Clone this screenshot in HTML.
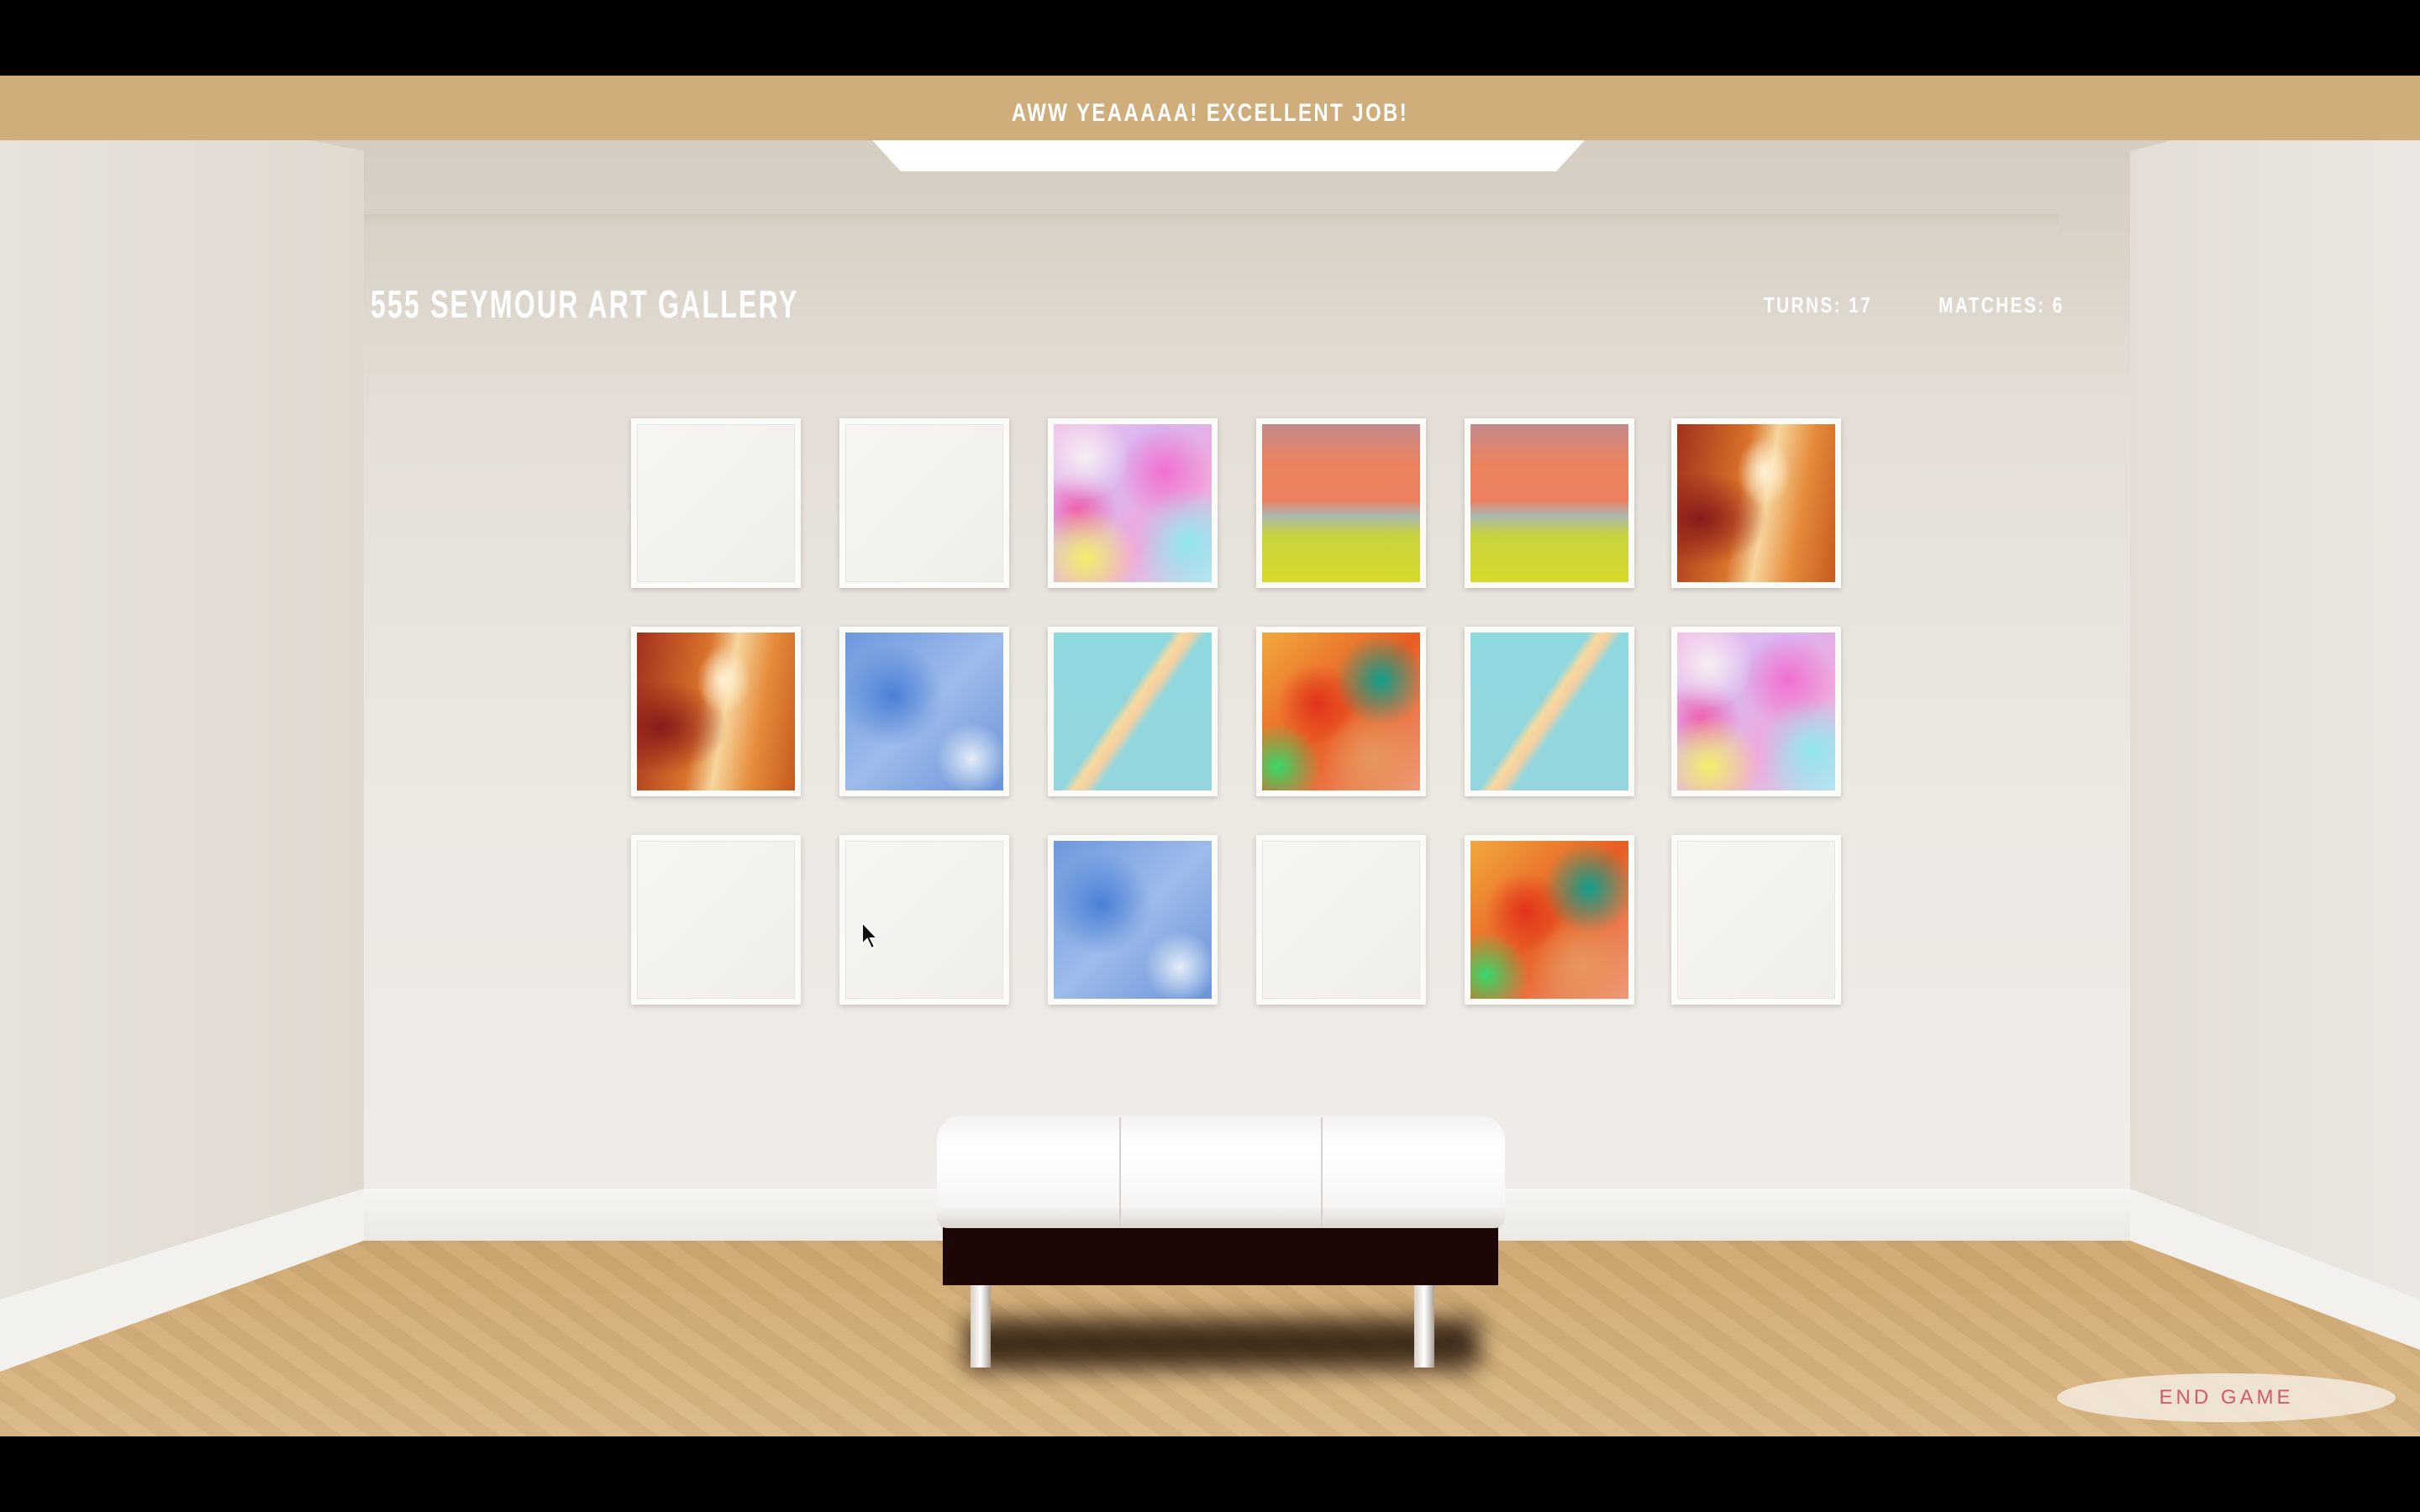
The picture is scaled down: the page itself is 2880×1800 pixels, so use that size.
<!DOCTYPE html>
<html><head><meta charset="utf-8"><style>
*{margin:0;padding:0;box-sizing:border-box}
body{width:2880px;height:1800px;overflow:hidden;background:#000;font-family:"Liberation Sans",sans-serif;position:relative}
.abs{position:absolute}
#room{left:0;top:90px;width:2880px;height:1620px;overflow:hidden;
background:linear-gradient(180deg,#d3c9bd 0px,#d9d1c6 180px,#e4ded6 400px,#ebe7e1 800px,#efece8 1300px,#f0eeeb 1400px)}
.txt{color:#fff;letter-spacing:3px;transform-origin:left center}
.card{position:absolute;width:202px;height:202px;background:#fbfbf8;box-shadow:0 2px 6px rgba(0,0,0,.18);padding:7px}
.card div{width:100%;height:100%}
.A div{background:linear-gradient(135deg,#f7f6f2,#efeee9);border:1px solid #e6e4de}
.B div{background:radial-gradient(circle at 20% 20%,#f6eef2 0,transparent 25%),radial-gradient(circle at 85% 75%,#8fe8ee 0,transparent 30%),radial-gradient(circle at 20% 85%,#f1ee6a 0,transparent 28%),radial-gradient(circle at 70% 30%,#f06fd0 0,transparent 30%),radial-gradient(circle at 15% 55%,#ef5fae 0,transparent 25%),linear-gradient(135deg,#f4c0e8,#d8b6f0,#f0a8dc,#b9e8f0)}
.C div{background:linear-gradient(180deg,#c48a8e 0%,#e9825c 25%,#ee8060 48%,#a9b8b0 58%,#c8d23e 70%,#d6da2c 100%)}
.D div{background:radial-gradient(ellipse at 55% 30%,#fff2d6 0,transparent 22%),radial-gradient(ellipse at 15% 60%,#8a1a1a 0,transparent 35%),linear-gradient(100deg,#a2311e,#d9722a 40%,#f6d59c 55%,#e58a3a 75%,#c65a1e)}
.E div{background:radial-gradient(circle at 80% 80%,#e4ecf7 0,transparent 20%),radial-gradient(circle at 30% 40%,#4b7fd6 0,transparent 35%),linear-gradient(135deg,#6b98dd,#9dbbea 50%,#6a93d8)}
.F div{background:linear-gradient(125deg,transparent 44%,#f3d9a0 48%,#f6cfa0 52%,transparent 57%),linear-gradient(180deg,#8ed8df,#95d6de)}
.G div{background:radial-gradient(circle at 75% 30%,#10a08c 0,transparent 28%),radial-gradient(circle at 35% 45%,#e2321c 0,transparent 30%),radial-gradient(circle at 10% 85%,#38d86a 0,transparent 22%),radial-gradient(circle at 70% 80%,#e6985c 0,transparent 30%),linear-gradient(135deg,#f1a83e,#e85d22 50%,#ee9a7a)}
</style></head><body>
<div id="room" class="abs">
 <!-- ceiling moulding -->
 <div class="abs" style="left:430px;top:165px;width:2020px;height:22px;background:linear-gradient(180deg,#d2c8bb,#ddd5cb)"></div>
 <!-- side walls -->
 <div class="abs" style="left:0;top:0;width:433px;height:1620px;background:linear-gradient(90deg,#e7e2db,#e0d9d0);clip-path:polygon(0 0,100% 90px,100% 1387px,0 1543px)"></div>
 <div class="abs" style="left:2535px;top:0;width:345px;height:1620px;background:linear-gradient(90deg,#e3ddd5,#ebe7e2);clip-path:polygon(0 90px,100% 0,100% 1543px,0 1387px)"></div>
 <!-- baseboards -->
 <div class="abs" style="left:433px;top:1325px;width:2102px;height:62px;background:linear-gradient(180deg,#f5f4f1,#ebe9e5)"></div>
 <div class="abs" style="left:0;top:1325px;width:433px;height:230px;background:#f3f1ee;clip-path:polygon(0 132px,100% 0,100% 62px,0 218px)"></div>
 <div class="abs" style="left:2535px;top:1325px;width:345px;height:230px;background:#f3f1ee;clip-path:polygon(0 0,100% 132px,100% 218px,0 62px)"></div>
 <!-- floor -->
 <div class="abs" style="left:0;top:1387px;width:2880px;height:233px;background:repeating-linear-gradient(35deg,rgba(0,0,0,.03) 0 18px,rgba(255,255,255,.04) 18px 36px),linear-gradient(180deg,#cfa870,#dbb886);clip-path:polygon(0 156px,433px 0,2535px 0,2880px 130px,2880px 233px,0 233px)"></div>
 <!-- light -->
 <div class="abs" style="left:1038px;top:77px;width:848px;height:37px;background:#fff;clip-path:polygon(0 0,100% 0,96% 100%,4% 100%)"></div>
 <!-- bench shadow -->
 <div class="abs" style="left:1150px;top:1480px;width:610px;height:60px;background:#1a0d05;filter:blur(14px);opacity:.8"></div>
 <!-- legs -->
 <div class="abs" style="left:1155px;top:1440px;width:24px;height:98px;background:linear-gradient(90deg,#d8cfc6,#fff,#a89e94)"></div>
 <div class="abs" style="left:1683px;top:1440px;width:24px;height:98px;background:linear-gradient(90deg,#d8cfc6,#fff,#a89e94)"></div>
 <!-- base -->
 <div class="abs" style="left:1122px;top:1370px;width:661px;height:70px;background:#1a0706"></div>
 <!-- cushion -->
 <div class="abs" style="left:1115px;top:1238px;width:676px;height:134px;border-radius:30px 30px 12px 12px;background:linear-gradient(180deg,#f4f2ef,#fff 30%,#f6f5f2 80%,#dcd8d2)"></div>
 <div class="abs" style="left:1332px;top:1240px;width:2px;height:130px;background:#d6d1ca"></div>
 <div class="abs" style="left:1572px;top:1240px;width:2px;height:130px;background:#d6d1ca"></div>
 <!-- end game -->
 <div class="abs" style="left:2448px;top:1545px;width:403px;height:58px;border-radius:50%;background:#f1e6d8;opacity:.92"></div>
 <div class="abs" style="left:2448px;top:1545px;width:403px;height:58px;line-height:58px;text-align:center;color:#d05a6c;font-size:24px;letter-spacing:4px">END GAME</div>
</div>
<!-- top banner -->
<div class="abs" style="left:0;top:90px;width:2880px;height:77px;background:#cfae7b"></div>
<div class="abs" style="left:0;top:90px;width:2880px;height:77px;line-height:90px;text-align:center;color:#fff;font-size:30px;font-weight:bold;letter-spacing:3px;transform:scaleX(.8)">AWW YEAAAAA! EXCELLENT JOB!</div>
<!-- header -->
<div class="abs txt" style="left:441px;top:336px;font-size:46px;line-height:52px;font-weight:bold;transform:scaleX(.7)">555 SEYMOUR ART GALLERY</div>
<div class="abs txt" style="left:2099px;top:348px;font-size:26px;font-weight:bold;transform:scaleX(.8)">TURNS: 17</div>
<div class="abs txt" style="left:2307px;top:348px;font-size:26px;font-weight:bold;transform:scaleX(.8)">MATCHES: 6</div>
<!-- grid -->
<div class="card A" style="left:751px;top:498px"><div></div></div>
<div class="card A" style="left:999px;top:498px"><div></div></div>
<div class="card B" style="left:1247px;top:498px"><div></div></div>
<div class="card C" style="left:1495px;top:498px"><div></div></div>
<div class="card C" style="left:1743px;top:498px"><div></div></div>
<div class="card D" style="left:1989px;top:498px"><div></div></div>
<div class="card D" style="left:751px;top:746px"><div></div></div>
<div class="card E" style="left:999px;top:746px"><div></div></div>
<div class="card F" style="left:1247px;top:746px"><div></div></div>
<div class="card G" style="left:1495px;top:746px"><div></div></div>
<div class="card F" style="left:1743px;top:746px"><div></div></div>
<div class="card B" style="left:1989px;top:746px"><div></div></div>
<div class="card A" style="left:751px;top:994px"><div></div></div>
<div class="card A" style="left:999px;top:994px"><div></div></div>
<div class="card E" style="left:1247px;top:994px"><div></div></div>
<div class="card A" style="left:1495px;top:994px"><div></div></div>
<div class="card G" style="left:1743px;top:994px"><div></div></div>
<div class="card A" style="left:1989px;top:994px"><div></div></div>
<!-- cursor -->
<svg class="abs" style="left:1024px;top:1096px" width="24" height="36" viewBox="0 0 24 36"><path d="M2 2 L2 28 L8 22 L13 33 L17 31 L12 21 L20 21 Z" fill="#111" stroke="#fff" stroke-width="2"/></svg>
</body></html>
